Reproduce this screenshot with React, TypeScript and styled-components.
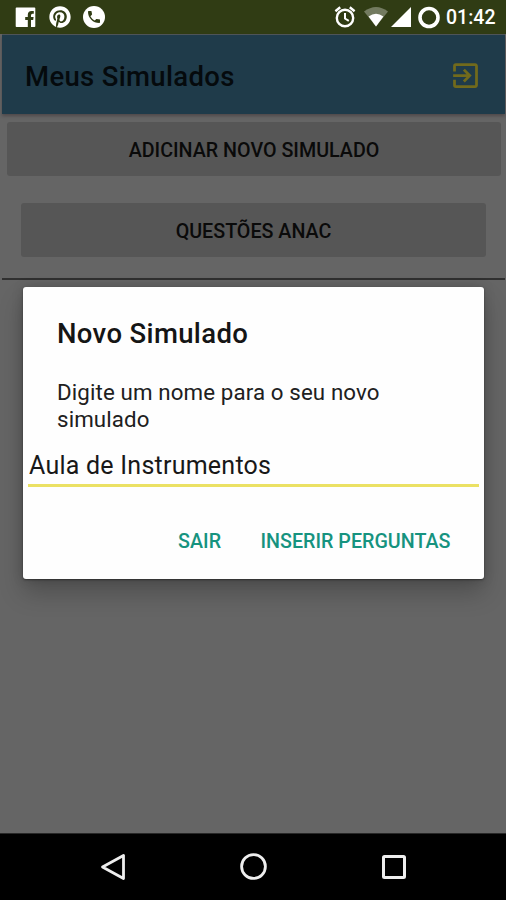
import React from "react";
import styled, { createGlobalStyle } from "styled-components";
import { FaPinterest } from "react-icons/fa";
import { MdExitToApp, MdPhone } from "react-icons/md";

const GlobalStyle = createGlobalStyle`
  * { box-sizing: border-box; }
  body { margin: 0; background: #656565; font-family: Roboto, sans-serif; }
  button { font-family: inherit; border: 0; margin: 0; padding: 0; }
`;

const Screen = styled.div`
  position: relative;
  width: 506px;
  height: 900px;
  display: flex;
  flex-direction: column;
  overflow: hidden;
  background: #656565;
`;

const StatusBar = styled.header`
  height: 34px;
  flex: none;
  display: flex;
  align-items: center;
  padding: 0 10px 0 15px;
  background: #303c14;
  color: #fff;
`;

const StatusGroup = styled.div<{ $gap: number }>`
  display: flex;
  align-items: center;
  gap: ${(p) => p.$gap}px;
  svg { display: block; flex: none; }
`;

const StatusRight = styled(StatusGroup)`
  margin-left: auto;
`;

const CallBadge = styled.span`
  width: 22px;
  height: 22px;
  border-radius: 50%;
  background: #fff;
  color: #303c14;
  display: flex;
  align-items: center;
  justify-content: center;
`;

const Clock = styled.span`
  width: 50px;
  margin-left: 2px;
  font-size: 19.5px;
  font-weight: 500;
  line-height: 34px;
  white-space: nowrap;
  padding-top: 2px;
`;

const AppBar = styled.div`
  height: 79px;
  flex: none;
  margin: 1px 1px 0 2px;
  padding: 4px 23px 0 23px;
  display: flex;
  align-items: center;
  justify-content: space-between;
  background: #1f3b4a;
  box-shadow: 0 2px 3px rgba(45, 30, 35, 0.4), 0 -1px 0 #50565a;
  svg { display: block; margin-bottom: 3px; }
`;

const AppTitle = styled.h1`
  margin: 0;
  font-size: 27.5px;
  font-weight: 500;
  letter-spacing: 0.33px;
  color: #050a0d;
`;

const Content = styled.main`
  flex: 1;
  display: flex;
  flex-direction: column;
  padding: 8px 5px 0 7px;
`;

const RaisedButton = styled.button<{ $inset?: boolean }>`
  height: 54px;
  flex: none;
  margin: ${(p) => (p.$inset ? "27px 15px 0 14px" : "0")};
  padding-top: ${(p) => (p.$inset ? 3 : 2)}px;
  border-radius: 3px;
  background: #565656;
  color: #0a0a0a;
  font-size: 19.7px;
  font-weight: 500;
  line-height: 51px;
`;

const Divider = styled.hr`
  width: 503px;
  height: 2px;
  margin: 21px 0 0 -5px;
  border: 0;
  background: #303030;
  flex: none;
`;

const Dialog = styled.section`
  position: absolute;
  left: 23px;
  top: 287px;
  width: 461px;
  height: 292px;
  display: flex;
  flex-direction: column;
  border-radius: 3px;
  background: #fefefe;
  box-shadow: 0 14px 24px rgba(0, 0, 0, 0.22), 0 0 12px rgba(0, 0, 0, 0.16),
    0 1px 2px rgba(0, 0, 0, 0.4);
`;

const DialogTitle = styled.h2`
  margin: 30px 34px 0;
  font-size: 27.5px;
  line-height: 34px;
  font-weight: 500;
  letter-spacing: 0.35px;
  color: #151515;
`;

const Message = styled.p`
  margin: 28px 34px 0;
  font-size: 22.3px;
  line-height: 27px;
  letter-spacing: 0.12px;
  color: #202020;
`;

const Field = styled.input`
  margin: 13px 5px 0;
  height: 41px;
  flex: none;
  padding: 1px 0 0 1px;
  border: 0;
  border-bottom: 3px solid #ebe164;
  outline: 0;
  background: transparent;
  font: 400 25px Roboto, sans-serif;
  letter-spacing: 0.24px;
  color: #181818;
`;

const Actions = styled.div`
  display: flex;
  justify-content: flex-end;
  gap: 39.5px;
  padding: 40px 33.5px 0 0;
`;

const TextButton = styled.button`
  background: none;
  color: #16937f;
  font-size: 19.7px;
  line-height: 30px;
  font-weight: 500;
  white-space: nowrap;
`;

const NavBar = styled.nav`
  height: 67px;
  flex: none;
  display: flex;
  align-items: center;
  justify-content: center;
  gap: 112px;
  padding-left: 2px;
  background: #000;
  border-top: 1px solid #282828;
  svg { display: block; }
`;

const FacebookIcon = () => (
  <svg width="21" height="21" viewBox="0 0 21 21">
    <path
      fill="#fff"
      d="M1.500 .5h18a.8.8 0 0 1 .8.8v18a.8.800 0 0 1-.8.8h-3.500v-7.100h2.200l.4-3h-2.600V8.300q0-1.500 1.500-1.500h1.300V4h-2.200q-3.800 0-3.800 3.900V10H10.200v3h2.600v7.100H1.500a.8.8 0 0 1-.8-.8V1.300a.8.8 0 0 1 .8-.8Z"
    />
  </svg>
);

const AlarmIcon = () => (
  <svg width="24" height="24" viewBox="0 0 24 24" fill="none" stroke="#fff" strokeWidth="2.400">
    <circle cx="12" cy="13" r="8.200" />
    <path d="M12 8v5.500l3.800 2.300" strokeWidth="2" />
    <path d="M2.400 6.200L7.200 2.300M21.600 6.200L16.800 2.300" />
  </svg>
);

const WifiIcon = () => (
  <svg width="24" height="20" viewBox="0 0 24 20">
    <path d="M0 4.500Q12-4.500 24 4.500L12 19.500Z" fill="#737b60" />
    <path d="M4.600 9.500Q12 3.800 19.400 9.500L12 19.500Z" fill="#fff" />
  </svg>
);

const SignalIcon = () => (
  <svg width="20" height="20" viewBox="0 0 20 20">
    <path d="M20 0v20H0Z" fill="#fff" />
  </svg>
);

const RingIcon = () => (
  <svg width="23" height="23" viewBox="0 0 23 23">
    <circle cx="11" cy="11.500" r="9" fill="none" stroke="#fff" strokeWidth="3.600" />
  </svg>
);

const RingSlot = styled.span`
  margin-left: 4px;
`;

const AlarmSlot = styled.span`
  margin-right: 4px;
`;

const App = () => (
  <Screen>
    <GlobalStyle />
    <StatusBar>
      <StatusGroup $gap={12.500}>
        <FacebookIcon />
        <FaPinterest size={22} />
        <CallBadge>
          <MdPhone size={16} />
        </CallBadge>
      </StatusGroup>
      <StatusRight $gap={3}>
        <AlarmSlot>
          <AlarmIcon />
        </AlarmSlot>
        <WifiIcon />
        <SignalIcon />
        <RingSlot>
          <RingIcon />
        </RingSlot>
        <Clock>01:42</Clock>
      </StatusRight>
    </StatusBar>
    <AppBar>
      <AppTitle>Meus Simulados</AppTitle>
      <MdExitToApp size={33} color="#716a1c" />
    </AppBar>
    <Content>
      <RaisedButton>ADICINAR NOVO SIMULADO</RaisedButton>
      <RaisedButton $inset>QUESTÕES ANAC</RaisedButton>
      <Divider />
    </Content>
    <NavBar>
      <svg width="28" height="28" viewBox="0 0 28 28">
        <path d="M23.500 2.500v23L2.500 14Z" fill="none" stroke="#eee" strokeWidth="2.800" strokeLinejoin="round" />
      </svg>
      <svg width="28" height="28" viewBox="0 0 28 28">
        <circle cx="13.500" cy="13.500" r="11.900" fill="none" stroke="#eee" strokeWidth="2.800" />
      </svg>
      <svg width="28" height="28" viewBox="0 0 28 28">
        <rect x="3.500" y="3.500" width="21" height="21" rx="1" fill="none" stroke="#eee" strokeWidth="3" />
      </svg>
    </NavBar>
    <Dialog role="dialog">
      <DialogTitle>Novo Simulado</DialogTitle>
      <Message>
        Digite um nome para o seu novo
        <br />
        simulado
      </Message>
      <Field defaultValue="Aula de Instrumentos" />
      <Actions>
        <TextButton>SAIR</TextButton>
        <TextButton>INSERIR PERGUNTAS</TextButton>
      </Actions>
    </Dialog>
  </Screen>
);

export default App;
